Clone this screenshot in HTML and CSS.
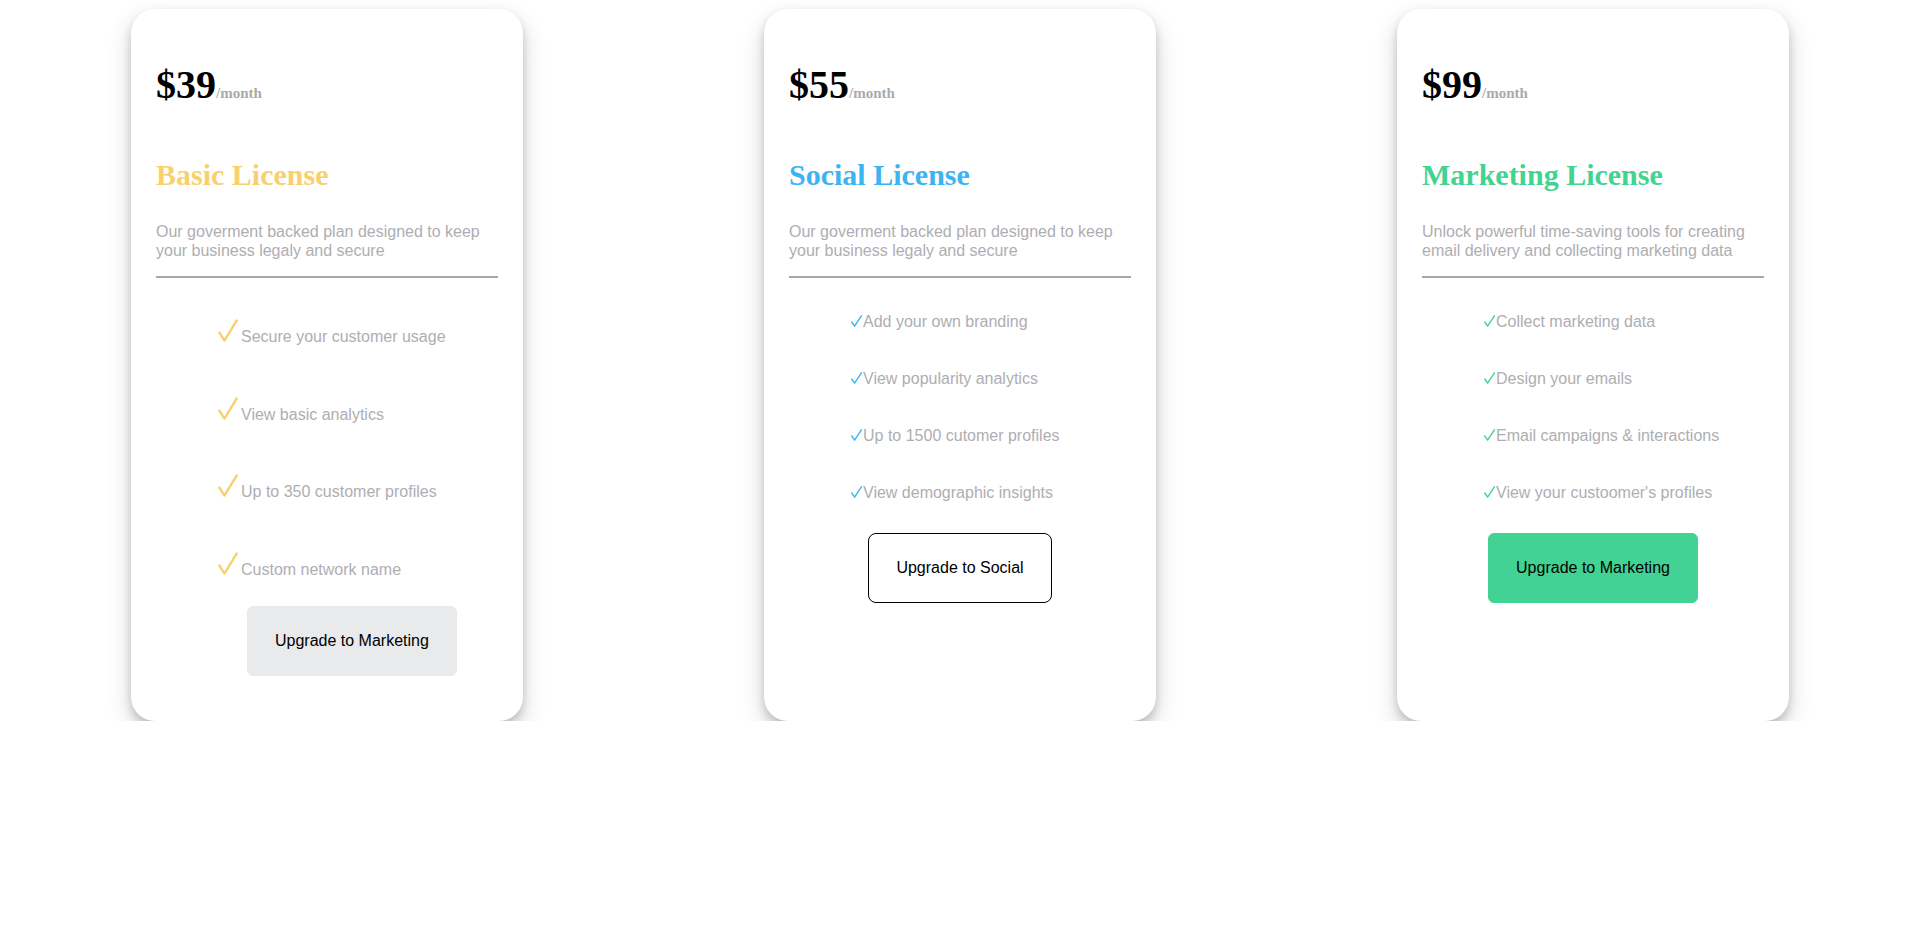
FILE: index.html
```html
<!DOCTYPE html>
<html lang="en">
<head>
<meta charset="utf-8">
<title>Pricing</title>
<link rel="stylesheet" href="styles.css">
</head>
<body>
<main class="plans">
  <section class="card card-basic">
    <div class="price"><span class="amount">$39</span><span class="per">/month</span></div>
    <h2 class="title">Basic License</h2>
    <p class="desc">Our goverment backed plan designed to keep your business legaly and secure</p>
    <hr class="rule">
    <ul class="features features-big">
      <li><svg class="check check-big" viewBox="0 0 20 23"><path d="M1.4 13.6 L6.4 21.6 L18.8 1.4"/></svg><span>Secure your customer usage</span></li>
      <li><svg class="check check-big" viewBox="0 0 20 23"><path d="M1.4 13.6 L6.4 21.6 L18.8 1.4"/></svg><span>View basic analytics</span></li>
      <li><svg class="check check-big" viewBox="0 0 20 23"><path d="M1.4 13.6 L6.4 21.6 L18.8 1.4"/></svg><span>Up to 350 customer profiles</span></li>
      <li><svg class="check check-big" viewBox="0 0 20 23"><path d="M1.4 13.6 L6.4 21.6 L18.8 1.4"/></svg><span>Custom network name</span></li>
    </ul>
    <button class="btn btn-basic">Upgrade to Marketing</button>
  </section>

  <section class="card card-social">
    <div class="price"><span class="amount">$55</span><span class="per">/month</span></div>
    <h2 class="title">Social License</h2>
    <p class="desc">Our goverment backed plan designed to keep your business legaly and secure</p>
    <hr class="rule">
    <ul class="features">
      <li><svg class="check" viewBox="0 0 11 12"><path d="M0.8 7 L3.6 11.2 L10.4 0.8"/></svg><span>Add your own branding</span></li>
      <li><svg class="check" viewBox="0 0 11 12"><path d="M0.8 7 L3.6 11.2 L10.4 0.8"/></svg><span>View popularity analytics</span></li>
      <li><svg class="check" viewBox="0 0 11 12"><path d="M0.8 7 L3.6 11.2 L10.4 0.8"/></svg><span>Up to 1500 cutomer profiles</span></li>
      <li><svg class="check" viewBox="0 0 11 12"><path d="M0.8 7 L3.6 11.2 L10.4 0.8"/></svg><span>View demographic insights</span></li>
    </ul>
    <button class="btn btn-social">Upgrade to Social</button>
  </section>

  <section class="card card-marketing">
    <div class="price"><span class="amount">$99</span><span class="per">/month</span></div>
    <h2 class="title">Marketing License</h2>
    <p class="desc">Unlock powerful time-saving tools for creating email delivery and collecting marketing data</p>
    <hr class="rule">
    <ul class="features">
      <li><svg class="check" viewBox="0 0 11 12"><path d="M0.8 7 L3.6 11.2 L10.4 0.8"/></svg><span>Collect marketing data</span></li>
      <li><svg class="check" viewBox="0 0 11 12"><path d="M0.8 7 L3.6 11.2 L10.4 0.8"/></svg><span>Design your emails</span></li>
      <li><svg class="check" viewBox="0 0 11 12"><path d="M0.8 7 L3.6 11.2 L10.4 0.8"/></svg><span>Email campaigns &amp; interactions</span></li>
      <li><svg class="check" viewBox="0 0 11 12"><path d="M0.8 7 L3.6 11.2 L10.4 0.8"/></svg><span>View your custoomer's profiles</span></li>
    </ul>
    <button class="btn btn-marketing">Upgrade to Marketing</button>
  </section>
</main>
</body>
</html>
```

FILE: styles.css
```css
body {
  margin: 0;
  background: #ffffff;
  font-family: "Liberation Sans", Arial, sans-serif;
  font-size: 16px;
}

.plans {
  display: flex;
  justify-content: center;
  gap: 241px;
  padding-top: 9px;
}

.card {
  width: 392px;
  height: 712px;
  box-sizing: border-box;
  padding: 0 25px;
  background: #ffffff;
  border-radius: 24px;
  box-shadow: 0 10px 24px rgba(0, 0, 0, 0.17), 0 5px 8px rgba(0, 0, 0, 0.17);
  display: flex;
  flex-direction: column;
}

.price {
  margin-top: 53px;
  font-family: "Liberation Serif", "Times New Roman", serif;
  font-weight: bold;
  font-size: 40px;
  line-height: 46px;
  color: #000;
}

.per {
  font-size: 15px;
  line-height: 1;
  color: #aaaaaa;
}

.title {
  margin: 49.4px 0 0;
  font-family: "Liberation Serif", "Times New Roman", serif;
  font-weight: bold;
  font-size: 30px;
  line-height: 35px;
}

.card-basic .title { color: #f9d06e; }
.card-social .title { color: #3cb4f1; }
.card-marketing .title { color: #43d391; }

.desc {
  margin: 31px 0 0;
  font-size: 16px;
  line-height: 18.4px;
  color: #aeaeb2;
}

.rule {
  margin: 16px 0 0;
  height: 0;
  border: 0;
  border-top: 2px solid #a8a8a8;
}

.features {
  list-style: none;
  margin: 35px 0 0;
  padding: 0 0 0 62px;
  display: flex;
  flex-direction: column;
  gap: 38.8px;
  color: #aeaeb2;
  font-size: 16px;
  line-height: 18px;
}

.features-big {
  margin-top: 41px;
  gap: 50.5px;
}

.check {
  width: 11px;
  height: 12px;
  margin-right: 1px;
  fill: none;
  stroke-width: 1.4;
  stroke-linecap: round;
  stroke-linejoin: round;
}

.check-big {
  width: 20px;
  height: 23px;
  margin-right: 3px;
  stroke-width: 2.4;
}

.card-basic .check { stroke: #f9d06e; }
.card-social .check { stroke: #3cb4f1; }
.card-marketing .check { stroke: #43d391; }

.btn {
  font-family: "Liberation Sans", Arial, sans-serif;
  font-size: 16px;
  line-height: 18px;
  color: #000;
  padding: 25px 27px;
  border: 1px solid transparent;
  border-radius: 6px;
  cursor: pointer;
}

.btn-basic {
  align-self: flex-start;
  margin: 27.5px 0 0 91px;
  background: #e9eaec;
  border-color: #e9eaec;
}

.btn-social {
  align-self: center;
  margin-top: 31.5px;
  background: #ffffff;
  border-color: #000;
  border-radius: 8px;
}

.btn-marketing {
  align-self: center;
  margin-top: 31.5px;
  background: #42d293;
  border-color: #42d293;
}
```
